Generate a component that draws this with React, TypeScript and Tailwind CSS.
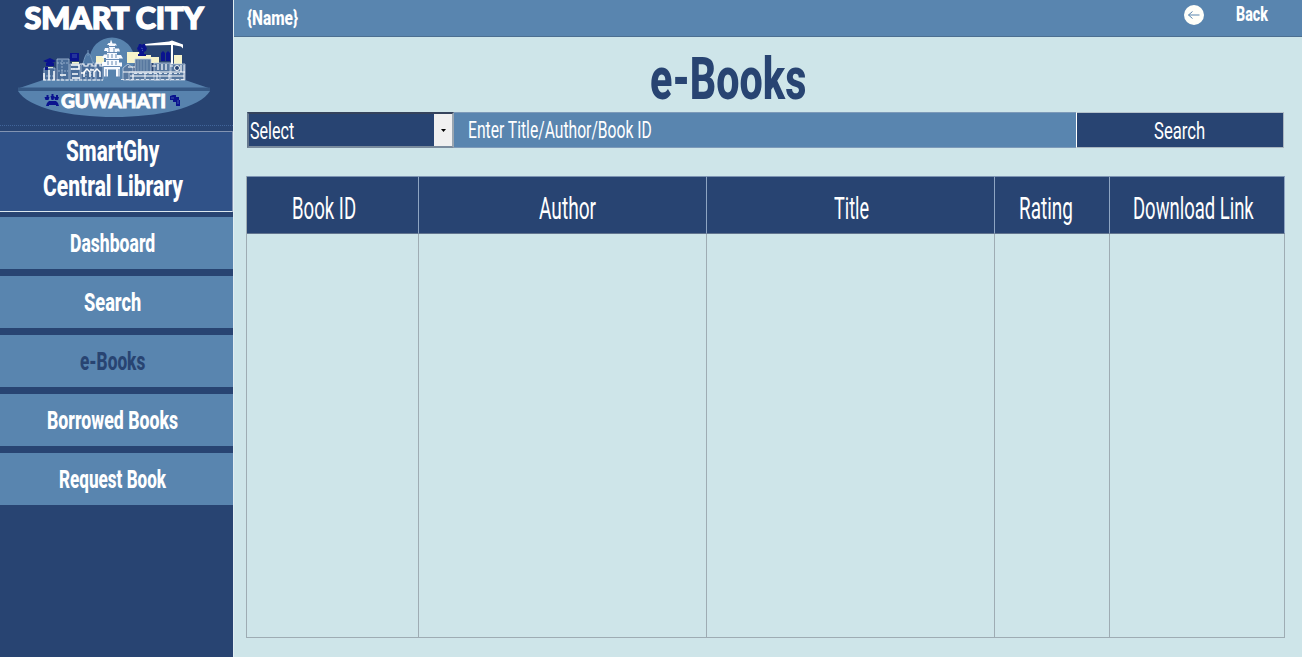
import { useLayoutEffect, useRef, useState } from "react";

/** A single line of condensed lettering, squeezed to the width of its box. */
function Condensed({ text, className }: { text: string; className: string }) {
  const box = useRef<HTMLSpanElement>(null);
  const line = useRef<HTMLSpanElement>(null);
  const [scale, setScale] = useState(0.6);
  useLayoutEffect(() => {
    if (box.current && line.current) {
      setScale(box.current.offsetWidth / line.current.offsetWidth);
    }
  }, [text]);
  return (
    <span ref={box} className={`flex shrink-0 justify-start ${className}`}>
      <span ref={line} className="origin-left whitespace-nowrap" style={{ transform: `scaleX(${scale})` }}>
        {text}
      </span>
    </span>
  );
}

const navItems = [
  { label: "Dashboard", style: "w-[85px]" },
  { label: "Search", style: "w-[57px]" },
  { label: "e-Books", style: "w-[65px] text-[#284472]" },
  { label: "Borrowed Books", style: "w-[131px]" },
  { label: "Request Book", style: "w-[107px]" },
];

const columns = [
  { label: "Book ID", cell: "w-[172px] pr-[17px]", text: "w-[64px]" },
  { label: "Author", cell: "w-[288px] pl-[10px]", text: "w-[57px]" },
  { label: "Title", cell: "w-[288px] pl-[1px]", text: "w-[35px]" },
  { label: "Rating", cell: "w-[115px] pr-[12px]", text: "w-[54px]" },
  { label: "Download Link", cell: "w-[175px] pr-[8px]", text: "w-[121px]" },
];

function Logo() {
  return (
    <svg className="block" width="233" height="124" viewBox="0 0 233 124">
      <text x="24.500" y="29" textLength="179" lengthAdjust="spacingAndGlyphs" fill="#fff" stroke="#fff" strokeWidth="1.5" className="font-['Lato',sans-serif] text-[30px] font-black">SMART CITY</text>
      <circle cx="112" cy="60" r="22.5" fill="#5883ae" />
      <path d="M43 80H185L210 88.5H18Z" fill="#5883ae" />
      <path d="M18 91H210C200 108 158 117 114 117S28 108 18 91Z" fill="#5883ae" />
      <path d="M18 87.5H210V91H18Z" fill="#365985" />
      {/* lit buildings behind the skyline */}
      <path d="M96 56h8v9h-8zM127 52h12v3h12v2h8v6h-32zM174 55h8v9h-8zM48 67h5v10h-5zM72 62h7v3h-7z" fill="#f6f3ca" />
      {/* left block of houses */}
      <g stroke="#a9bfd8" strokeWidth=".8" fill="#4a6c98">
        <path d="M44 68h11v12H44zM57 59h12v21H57zM70 64h10v16H70zM81 66q7-14 15 0v14H81zM95 64h8v16h-8z" />
        <path d="M43 76h12M57 63h12M58 71h10M70 69h10M62 60v20M86 62v18M91 62v18" strokeDasharray="2 1" />
      </g>
      <path d="M83 64q5-22 10 0M88 50v6" fill="#4f78a5" stroke="#7295bb" />
      <path d="M80 64h4v2h4v-2h4v2h4v-3h4v3h3" fill="none" stroke="#f2f5fa" strokeWidth="1.2" />
      <path d="M44 80V73M49 80V70M54 80V71M71 65h8v4h-8M84 77v-5l3-3 3 3v5M94 77v-5l3-3 3 3v5M81 73h4M90 70h4M60 75h6M72 74h6M72 78h8" fill="none" stroke="#fff" strokeWidth="1.5" />
      <path d="M43 80h60" stroke="#f2f5fa" strokeDasharray="3 1.500" />
      {/* pagoda */}
      <path d="M111 39.500l1.500 4h3l1.500 2h-2v3h4l1 3h-3v3.500h4l2 3.500h-4v4h3v4h-2v10h-4v-7h-8v7h-4V66h-2v-4h4v-4h-4l2-3.500h3V51h-3l1-3h4v-3h-2l1.500-2h1.500z" fill="#f8faff" />
      <path d="M108 46.500h7M106 52.500h11M104 59.500h15M104 66.500h16M109 48v4M114 48v4M108 54v4M112 54v4M116 54v4M108 61v4M112 61v4M116 61v4M106 69v10M119 69v10" stroke="#6789b3" strokeWidth="1" />
      {/* station and workshops */}
      <g stroke="#c3d1e2" strokeWidth=".8" fill="#58789f">
        <path d="M123 68l5-4 5 4v12h-10zM135 59h16v14h-16zM129 72h31v8h-31zM154 63h17v17h-17zM170 64h15v16h-15z" />
      </g>
      <path d="M138 60v11M141 60v11M144 60v11M147 60v11" stroke="#8ca4bf" strokeWidth=".8" />
      <path d="M123 72h62M128 67h7M152 66h4M158 64v6M162 64v6M166 64v6M170 66h3M181 65v7M130 76h54" stroke="#fff" strokeWidth="1.2" />
      <path d="M121 79.500h64M134 73.500h46" stroke="#dce5ef" strokeDasharray="3 2" />
      <path d="M133 74v5M145 74v5M157 74v5M169 74v5M184 65v15" stroke="#f2f5fa" />
      <circle cx="177" cy="68" r="2.500" fill="#284472" stroke="#fff" />
      {/* crane */}
      <path d="M145 44l24-2.500 3-1 11 4v4l-2-2-8-1.500v19h-2V45l-26 .5z" fill="#fff" />
      {/* navy pictograms */}
      <g fill="#0a138e">
        <path d="M43 61l7-3 6 3-6 3zM46 63h8v3h-8zM45 67h3v3h-3zM70 53h9v8h-9z" />
        <path d="M138 47l1-3h2l1 1 1-1h2l1 3 1 1-1 3-2 1v2h2v2h-8v-2h2v-2l-2-1-1-3z" />
        <path d="M161 53l2-2 2 2v8h-4zM166 53l2-2 2 2v8h-4z" />
        <path d="M46.500 95h2v2h1l-1 3h-3l-1-3h2zM51.500 94h2v2h1l-1 4h-2l-1-4h1zM56 95h2v2h1l-1 3h-3l-1-3h2zM47 103l2-2h7l2 2 1 3h-3v-1h-7v1h-3z" />
        <path d="M170 96l3-1h3v2h3v3h1v6h-4v-4h-3v-2h-3z" />
      </g>
      <path d="M72 55h5m-5 2h5m64-9 2 1m-1 1 1 1M171 98h3m3 3h2m-2 2h2" stroke="#6386bd" strokeWidth=".6" />
      <text x="61" y="108" textLength="105" lengthAdjust="spacingAndGlyphs" fill="#fff" stroke="#fff" strokeWidth=".9" className="font-['Lato',sans-serif] text-[19.5px] font-black">GUWAHATI</text>
    </svg>
  );
}

export default function App() {
  return (
    <div className="flex h-[657px] w-[1302px] overflow-hidden bg-[#cee5e9] font-['Roboto',sans-serif] text-white">
      <aside className="flex w-[233px] shrink-0 flex-col bg-[#284472]">
        <div className="h-[131px]">
          <Logo />
          <div className="mt-[1px] border-t border-dotted border-[#41659a]" />
        </div>
        <div className="flex h-[81px] flex-col items-center border-t border-r border-b border-t-[#8294b3] border-r-[#8294b3] border-b-[#dce8ef] bg-[#305288] pt-[1px] pr-[7px] text-[30px] leading-[35px] font-extrabold">
          <Condensed text="SmartGhy" className="w-[93px]" />
          <Condensed text="Central Library" className="w-[140px]" />
        </div>
        <nav className="mt-[5px] flex flex-col gap-[7.5px] text-[26.5px] font-extrabold">
          {navItems.map((item) => (
            <button key={item.label} className="flex h-[51.6px] items-center justify-center bg-[#5985af] pr-[8px]">
              <Condensed text={item.label} className={item.style} />
            </button>
          ))}
        </nav>
      </aside>

      <div className="flex w-[1069px] flex-col border-l border-[#e0edf2]">
        <header className="flex h-[37px] shrink-0 justify-between border-b border-[#4c6f91] bg-[#5985af] pr-[34px] pl-[13px] font-extrabold">
          <Condensed text="{Name}" className="mt-[3px] w-[51px] text-[20px]" />
          <button className="flex h-[29px] items-center gap-[32px] text-[20.5px]">
            <svg width="20" height="20" viewBox="0 0 20 20" fill="none">
              <circle cx="10" cy="10" r="10" fill="#fffff9" />
              <path d="M15.5 10h-11m4-3.500-4 3.500 4 3.500" stroke="#5985af" strokeWidth="1" />
            </svg>
            <Condensed text="Back" className="w-[32px]" />
          </button>
        </header>

        <main className="flex flex-col pl-[12px]">
          <div className="flex h-[75px] items-start pt-[6px] pl-[404px] text-[59px] leading-[72px] font-extrabold text-[#284472]">
            <Condensed text="e-Books" className="w-[156px]" />
          </div>

          <div className="ml-[1px] flex h-[36px] w-[1037px] bg-[#5985af] text-[24.5px] leading-[35px]">
            <div className="flex w-[207px] justify-between border-2 border-t-[#35435c] border-r-[#9aa6b1] border-b-[#798b9d] border-l-[#66788e] bg-[#284472]">
              <Condensed text="Select" className="-mt-[1px] ml-[1px] w-[44px]" />
              <span className="flex w-[18px] items-center justify-center bg-[#f0f0f0]">
                <svg width="5" height="3" viewBox="0 0 5 3"><path d="M0 0h5L2.500 3z" fill="#000" /></svg>
              </span>
            </div>
            <div className="flex flex-1 border-y border-[#7d9ab9] pl-[14px]">
              <Condensed text="Enter Title/Author/Book ID" className="-mt-[1px] w-[184px]" />
            </div>
            <button className="flex w-[208px] items-center justify-center border border-t-[#b5c2cc] border-r-[#a9b6c0] border-b-[#a9b6c0] border-l-white bg-[#284472] pr-[2px]">
              <Condensed text="Search" className="w-[51px]" />
            </button>
          </div>

          <section className="mt-[28px] flex h-[462px] w-[1039px] border-l border-[#9eacb3]">
            {columns.map((column) => (
              <div key={column.label} className="flex flex-col">
                <div className={`flex h-[58px] items-center justify-center border-t border-r border-b border-t-[#7d94b3] border-r-[#8ea5c2] border-b-[#62758f] bg-[#284472] pt-[7px] text-[30.5px] ${column.cell}`}>
                  <Condensed text={column.label} className={column.text} />
                </div>
                <div className="flex-1 border-r border-b border-[#9eacb3]" />
              </div>
            ))}
          </section>
        </main>
      </div>
    </div>
  );
}
